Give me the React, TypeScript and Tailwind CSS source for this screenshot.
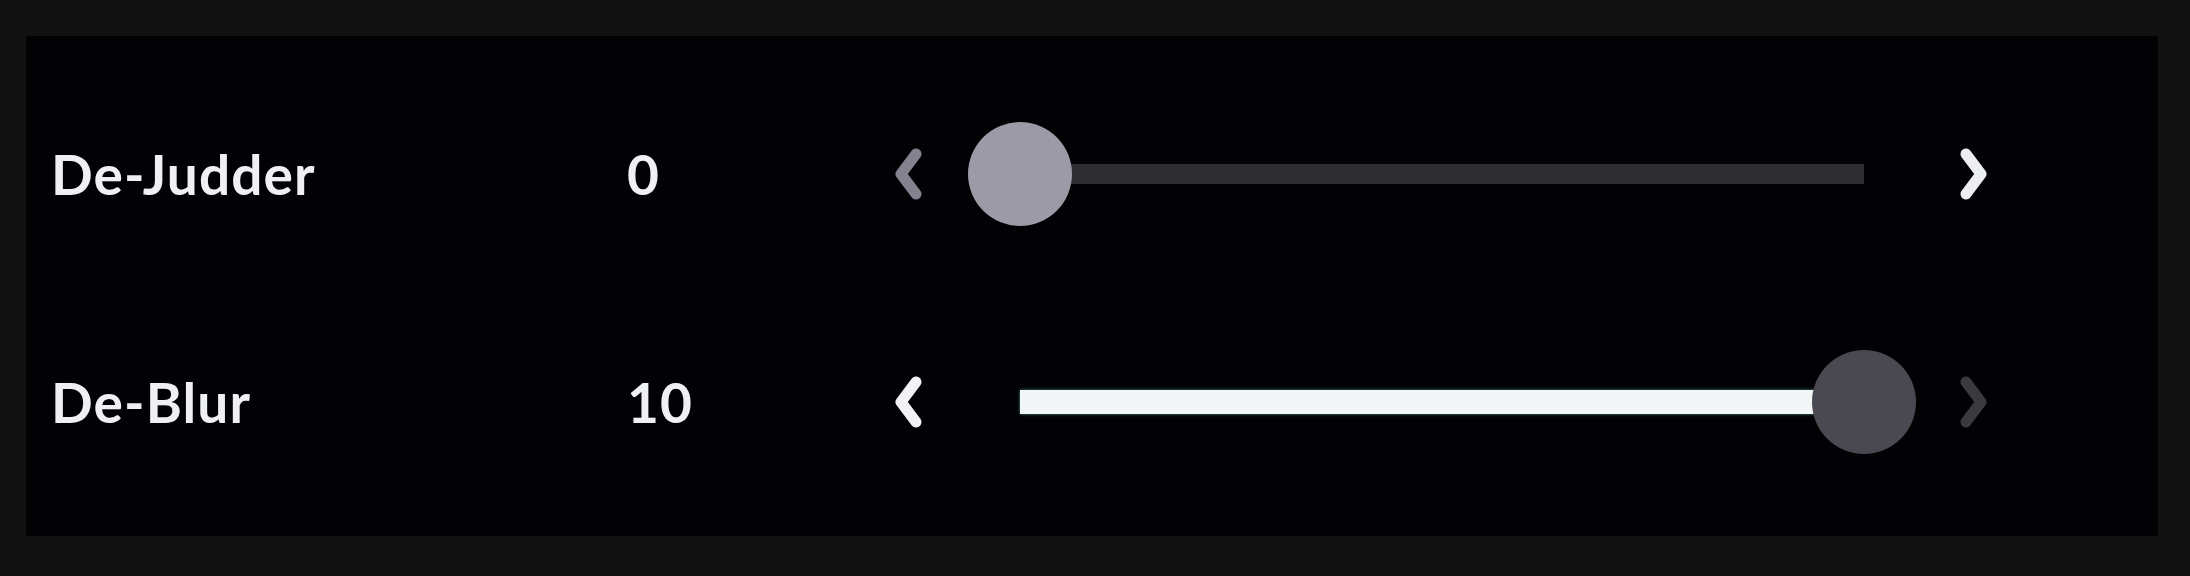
import React from 'react';

type Row = {
  label: string;
  value: number;
  max: number;
  focused: boolean;
};

const ROWS: Row[] = [
  { label: 'De-Judder', value: 0, max: 10, focused: true },
  { label: 'De-Blur', value: 10, max: 10, focused: false },
];

const Chevron: React.FC<{ dir: 'left' | 'right'; className: string }> = ({ dir, className }) => (
  <svg width="30" height="54" viewBox="0 0 30 54" className={className}>
    <polyline
      points={dir === 'left' ? '23,7 8,27 23,47' : '7,7 22,27 7,47'}
      fill="none"
      stroke="currentColor"
      strokeWidth="11"
      strokeLinecap="round"
      strokeLinejoin="round"
    />
  </svg>
);

const Slider: React.FC<{ row: Row }> = ({ row }) => {
  const pct = (row.value / row.max) * 100;
  const atMin = row.value === 0;
  const atMax = row.value === row.max;
  return (
    <div className="flex items-center">
      <Chevron dir="left" className={atMin ? 'text-[#84828e]' : 'text-[#f2f2f6]'} />
      <div className="relative ml-[97px] w-[844px] h-[24px]">
        <div className="absolute inset-y-[2px] left-0 right-0 bg-[#2e2e32]" />
        {pct > 0 && (
          <div
            className="absolute inset-y-0 left-0 bg-[#f3f6f6] shadow-[0_0_3px_rgba(120,220,210,0.6)]"
            style={{ width: `${pct}%` }}
          />
        )}
        <div
          className={`absolute top-1/2 w-[104px] h-[104px] -translate-x-1/2 -translate-y-1/2 rounded-full ${
            row.focused ? 'bg-[#9c9aa6]' : 'bg-[#4a4951]'
          }`}
          style={{ left: `${pct}%` }}
        />
      </div>
      <Chevron dir="right" className={`ml-[95px] ${atMax ? 'text-[#3a3a3e]' : 'text-[#eceef2]'}`} />
    </div>
  );
};

export default function App() {
  return (
    <div className="w-[2190px] h-[576px] bg-[#111111] pl-[26px] pt-[36px] pr-[32px] pb-[40px]">
      <div
        className="h-full bg-[#020204] pt-[24px] pl-[25px] text-[#eef0f6] font-bold"
        style={{ fontFamily: 'Lato, "Open Sans", sans-serif' }}
      >
        {ROWS.map((row) => (
          <div key={row.label} className="flex items-center h-[228px]">
            <div className="w-[576px] text-[55px] leading-none tracking-[0.02em]">{row.label}</div>
            <div className="w-[266px] text-[55px] leading-none tracking-[0.02em]">{row.value}</div>
            <Slider row={row} />
          </div>
        ))}
      </div>
    </div>
  );
}
